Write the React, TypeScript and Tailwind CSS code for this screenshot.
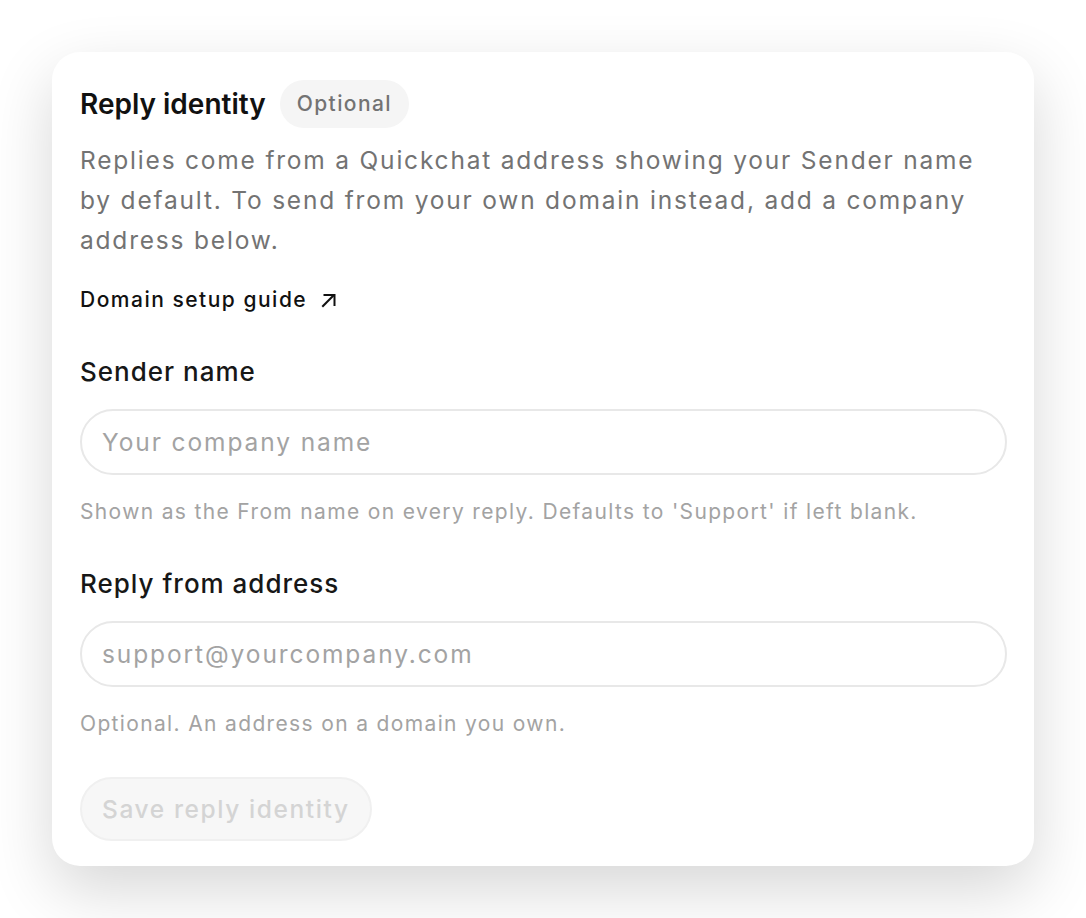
import React from 'react';

const Field = ({ label, placeholder, help }: { label: string; placeholder: string; help: string }) => (
  <div className="mt-[38px]">
    <label className="block text-[26px] leading-[36px] font-medium tracking-[1px] text-[#171717]">{label}</label>
    <input
      type="text"
      placeholder={placeholder}
      className="mt-[19px] block w-full h-[66px] rounded-full border-2 border-[#e8e8e8] bg-white px-[20px] text-[24.5px] tracking-[1.9px] text-[#171717] placeholder:text-[#a3a3a3] outline-none"
    />
    <p className="mt-[21px] text-[21px] leading-[32px] tracking-[1.35px] text-[#a3a3a3]">{help}</p>
  </div>
);

export default function App() {
  return (
    <div className="min-h-screen bg-white p-[52px]" style={{ fontFamily: 'Inter, "Noto Sans", sans-serif' }}>
      <div className="rounded-[28px] bg-white pl-[28px] pr-[27px] pt-[28px] pb-[25px] shadow-[0_24px_64px_rgba(0,0,0,0.16)]">
        {/* Header */}
        <div className="flex items-center gap-[14px]">
          <h2 className="text-[28px] leading-[36px] font-semibold text-[#111111]">Reply identity</h2>
          <span className="flex h-[48px] items-center rounded-full bg-[#f5f5f5] px-[17px] text-[21px] font-medium tracking-[1.4px] text-[#737373]">
            Optional
          </span>
        </div>
        <p className="mt-[12px] text-[24.5px] leading-[40px] tracking-[1.8px] text-[#737373]">
          Replies come from a Quickchat address showing your Sender name
          <br />
          by default. To send from your own domain instead, add a company
          <br />
          address below.
        </p>
        <a href="#" className="mt-[24px] flex items-center gap-[14px] text-[21px] leading-[32px] font-medium tracking-[1.5px] text-[#111111]">
          Domain setup guide
          <svg width="15" height="15" viewBox="0 0 15 15" fill="none" stroke="currentColor" strokeWidth="2" strokeLinecap="square">
            <path d="M2 13 12.5 2.5" />
            <path d="M3.5 2h10v10" />
          </svg>
        </a>

        <Field label="Sender name" placeholder="Your company name" help="Shown as the From name on every reply. Defaults to 'Support' if left blank." />
        <Field label="Reply from address" placeholder="support@yourcompany.com" help="Optional. An address on a domain you own." />

        <button
          disabled
          className="mt-[37px] h-[64px] rounded-full border-2 border-[#f0f0f0] bg-[#f7f7f7] px-[20px] text-[24.5px] font-medium tracking-[1.6px] text-[#d4d4d4]"
        >
          Save reply identity
        </button>
      </div>
    </div>
  );
}
